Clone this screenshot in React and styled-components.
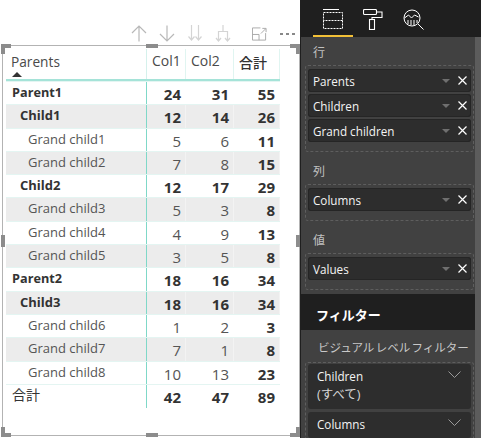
import React from "react";
import styled, { createGlobalStyle } from "styled-components";

const GlobalStyle = createGlobalStyle`
  html, body { margin: 0; padding: 0; background: #fff; }
  body { width: 481px; height: 438px; overflow: hidden; font-family: "Open Sans", "Noto Sans CJK JP", sans-serif; }
`;

const rows = [
  { name: "Parent1", level: 0, vals: [24, 31, 55], bold: true },
  { name: "Child1", level: 1, vals: [12, 14, 26], bold: true, shade: true },
  { name: "Grand child1", level: 2, vals: [5, 6, 11] },
  { name: "Grand child2", level: 2, vals: [7, 8, 15], shade: true },
  { name: "Child2", level: 1, vals: [12, 17, 29], bold: true },
  { name: "Grand child3", level: 2, vals: [5, 3, 8], shade: true },
  { name: "Grand child4", level: 2, vals: [4, 9, 13] },
  { name: "Grand child5", level: 2, vals: [3, 5, 8], shade: true },
  { name: "Parent2", level: 0, vals: [18, 16, 34], bold: true },
  { name: "Child3", level: 1, vals: [18, 16, 34], bold: true, shade: true },
  { name: "Grand child6", level: 2, vals: [1, 2, 3] },
  { name: "Grand child7", level: 2, vals: [7, 1, 8], shade: true },
  { name: "Grand child8", level: 2, vals: [10, 13, 23] },
  { name: "合計", level: 0, vals: [42, 47, 89], total: true },
];

const handles = [
  { x: "left", y: "top", w: 10, h: 10 },
  { x: "mid", y: "top", w: 12, h: 4 },
  { x: "right", y: "top", w: 10, h: 10 },
  { x: "left", y: "mid", w: 4, h: 12 },
  { x: "right", y: "mid", w: 4, h: 12 },
  { x: "left", y: "bottom", w: 10, h: 10 },
  { x: "mid", y: "bottom", w: 12, h: 4 },
  { x: "right", y: "bottom", w: 10, h: 10 },
];

export default function App() {
  return (
    <Page>
      <GlobalStyle />
      <Canvas>
        <Toolbar>
          <ToolIcon viewBox="0 0 16 17">
            <path d="M8 16.5V1M1 8l7-7 7 7" />
          </ToolIcon>
          <ToolIcon viewBox="0 0 16 17">
            <path d="M8 .5V16M1 9l7 7 7-7" />
          </ToolIcon>
          <ToolIcon viewBox="0 0 16 17" $faint>
            <path d="M4.5 0v15M1.5 11.5l3 3.5 3-3.5M11.5 0v15M8.5 11.5l3 3.5 3-3.5" />
          </ToolIcon>
          <ToolIcon viewBox="0 0 16 17" $faint>
            <path d="M8 0v6M3.5 16V6.5h9V16M1 13l2.5 3 2.5-3M10 13l2.5 3 2.5-3" />
          </ToolIcon>
          <FocusIcon viewBox="0 0 16 14">
            <path d="M9 .5H.5v13h14V6M.5 7.5h7v6M9.5 6.5l5-5M11 1h4v4" />
          </FocusIcon>
          <More>
            <i />
            <i />
            <i />
          </More>
        </Toolbar>
        <Frame>
          {handles.map((h) => (
            <Handle key={h.x + h.y} $x={h.x} $y={h.y} $w={h.w} $h={h.h} />
          ))}
          <Matrix>
            <HeaderRow>
              <NameHead>
                Parents
                <SortMark />
              </NameHead>
              <ColHead>Col1</ColHead>
              <ColHead>Col2</ColHead>
              <TotalHead>合計</TotalHead>
            </HeaderRow>
            {rows.map((r) => (
              <Row key={r.name} $shade={r.shade}>
                <NameCell $level={r.level} $bold={r.bold} $total={r.total}>
                  {r.name}
                </NameCell>
                {r.vals.map((v, i) => (
                  <ValueCell key={i} $bold={r.bold || r.total || i === 2} $shade={r.shade}>
                    {v}
                  </ValueCell>
                ))}
              </Row>
            ))}
          </Matrix>
        </Frame>
      </Canvas>

      <Panel>
        <Tabs>
          <Tab $active>
            <svg width="20" height="20" viewBox="0 0 20 20" fill="none" stroke="#fff">
              <path d="M0 .5h16" />
              <path strokeDasharray="2 1" d="M.5 3.5h19v8H.5zM.5 11.5v8h19v-8" />
            </svg>
          </Tab>
          <Tab>
            <svg width="20" height="21" viewBox="0 0 20 21" fill="none" stroke="#fff" strokeWidth="1.1">
              <rect x=".5" y=".5" width="13" height="5" rx="1" />
              <path d="M13.5 3h5.5v5.5H9V10.5" />
              <rect x="6.5" y="10.5" width="5" height="10" />
            </svg>
          </Tab>
          <Tab>
            <svg width="21" height="21" viewBox="0 0 21 21" fill="none" stroke="#fff" strokeWidth="1">
              <circle cx="9" cy="9" r="8" />
              <path d="M15 15l5.5 5.5M1.5 9l4-3 3 3 3-3 4 2M5 11v4M8 11v5M11 11v5M14 11v3" />
            </svg>
          </Tab>
        </Tabs>
        <Scroller>
          <FieldArea>
            <SectionLabel>行</SectionLabel>
            <Well>
              <Pill>Parents<PillControls /></Pill>
              <Pill>Children<PillControls /></Pill>
              <Pill>Grand children<PillControls /></Pill>
            </Well>
            <SectionLabel>列</SectionLabel>
            <Well>
              <Pill>Columns<PillControls /></Pill>
            </Well>
            <SectionLabel>値</SectionLabel>
            <Well>
              <Pill>Values<PillControls /></Pill>
            </Well>
          </FieldArea>
          <FilterTitle>フィルター</FilterTitle>
          <FilterArea>
            <FilterLabel>ビジュアル レベル フィルター</FilterLabel>
            <FilterWell>
              <FilterCard>
                <FilterName>Children<Chevron /></FilterName>
                <FilterValue>(すべて)</FilterValue>
              </FilterCard>
              <FilterCard>
                <FilterName>Columns<Chevron /></FilterName>
              </FilterCard>
            </FilterWell>
          </FilterArea>
        </Scroller>
        <ScrollThumb />
      </Panel>
    </Page>
  );
}

const PillControls = () => (
  <Controls>
    <Caret />
    <svg width="9" height="9" viewBox="0 0 9 9" stroke="#fff" strokeWidth="1.2">
      <path d="M.5.5l8 8M8.5.5l-8 8" />
    </svg>
  </Controls>
);

const Chevron = () => (
  <ChevronIcon width="13" height="7" viewBox="0 0 13 7" fill="none" stroke="#9a9a9a">
    <path d="M.5.5l6 6 6-6" />
  </ChevronIcon>
);

const Page = styled.div`
  display: flex;
  width: 481px;
  height: 438px;
  overflow: hidden;
`;

const Canvas = styled.div`
  width: 300px;
  flex: none;
  display: flex;
  flex-direction: column;
  padding: 24px 0 2px 2px;
  box-sizing: border-box;
`;

const Toolbar = styled.div`
  height: 19px;
  display: flex;
  align-items: center;
  justify-content: flex-end;
  padding-right: 5px;
`;

const ToolIcon = styled.svg`
  width: 16px;
  height: 17px;
  margin-right: 12px;
  fill: none;
  stroke: ${(p) => (p.$faint ? "#d4d4d4" : "#b8b8b8")};
  stroke-width: 1.2;
`;

const FocusIcon = styled.svg`
  width: 15px;
  height: 14px;
  margin: 0 13px 0 9px;
  fill: none;
  stroke: #a8a8a8;
`;

const More = styled.div`
  display: flex;
  gap: 3px;
  width: 15px;
  i {
    width: 3px;
    height: 2px;
    background: #888;
  }
`;

const Frame = styled.div`
  position: relative;
  flex: 1;
  margin-top: 2px;
  border: 1px solid #b3b3b3;
  padding: 3px 0 0 3px;
`;

const Handle = styled.span`
  position: absolute;
  width: ${(p) => p.$w}px;
  height: ${(p) => p.$h}px;
  background: #8c8c8c;
  ${(p) =>
    p.$x === "left"
      ? "left: -2px;"
      : p.$x === "right"
        ? "right: -1px;"
        : "left: 50%; margin-left: -5px;"}
  ${(p) =>
    p.$y === "top"
      ? "top: -2px;"
      : p.$y === "bottom"
        ? "bottom: -2px;"
        : "top: 50%; margin-top: -6px;"}
  ${(p) =>
    p.$x !== "mid" && p.$y !== "mid"
      ? `clip-path: polygon(${
          p.$x === "left"
            ? "0 0, 100% 0, 100% 40%, 40% 40%, 40% 100%, 0 100%"
            : "0 0, 100% 0, 100% 100%, 60% 100%, 60% 40%, 0 40%"
        });`
      : ""}
  ${(p) =>
    p.$y === "bottom" && p.$x === "left"
      ? "clip-path: polygon(0 0, 40% 0, 40% 60%, 100% 60%, 100% 100%, 0 100%);"
      : ""}
  ${(p) =>
    p.$y === "bottom" && p.$x === "right"
      ? "clip-path: polygon(60% 0, 100% 0, 100% 100%, 0 100%, 0 60%, 60% 60%);"
      : ""}
`;

const Matrix = styled.div`
  width: 274px;
  display: flex;
  flex-direction: column;
  color: #333;
`;

const grid = "141px 39px 48px 46px";

const HeaderRow = styled.div`
  display: grid;
  grid-template-columns: ${grid};
  height: 30px;
  border-bottom: 2px solid #a5e3d8;
`;

const NameHead = styled.div`
  position: relative;
  font-size: 13.7px;
  line-height: 20px;
  padding: 3px 0 0 5px;
  color: #4a4a4a;
  border-right: 1px solid #d5f1ec;
`;

const SortMark = styled.span`
  position: absolute;
  left: 6px;
  top: 23px;
  width: 0;
  height: 0;
  border-left: 5px solid transparent;
  border-right: 5px solid transparent;
  border-bottom: 5px solid #333;
`;

const ColHead = styled.div`
  font-size: 14px;
  line-height: 20px;
  padding: 2px 0 0 5px;
  color: #4a4a4a;
  border-right: 1px solid #e0f5f1;
`;

const TotalHead = styled(ColHead)`
  color: #333;
  font-family: "Noto Sans CJK JP", sans-serif;
  font-weight: 500;
  padding-top: 3px;
`;

const Row = styled.div`
  display: grid;
  grid-template-columns: ${grid};
  height: 23.3px;
  box-sizing: border-box;
  background: ${(p) => (p.$shade ? "#ececec" : "transparent")};
  border-top: 1px solid #e4f5f2;
`;

const NameCell = styled.div`
  font-size: ${(p) => (p.$total ? 14 : p.$level === 0 && p.$bold ? 12.7 : 13)}px;
  font-weight: ${(p) => (p.$bold ? 700 : 400)};
  line-height: 20px;
  padding-left: ${(p) => [6, 14, 22][p.$level]}px;
  color: ${(p) => (p.$level === 2 ? "#555" : "#333")};
  border-right: 1px solid #7fd8c8;
  white-space: nowrap;
`;

const ValueCell = styled.div`
  font-size: 15px;
  font-weight: ${(p) => (p.$bold ? 700 : 400)};
  line-height: 22px;
  padding: 1px 4px 0 0;
  text-align: right;
  color: ${(p) => (p.$bold ? "#333" : "#555")};
  border-right: 1px solid ${(p) => (p.$shade ? "#f3f3f3" : "transparent")};
`;

const Panel = styled.div`
  position: relative;
  width: 181px;
  flex: none;
  display: flex;
  flex-direction: column;
  background: #1f1f1f;
`;

const Tabs = styled.div`
  height: 37px;
  display: flex;
  padding-left: 13px;
  flex: none;
`;

const Tab = styled.div`
  width: 40px;
  height: 37px;
  display: flex;
  align-items: flex-start;
  justify-content: center;
  padding-top: 9px;
  box-sizing: border-box;
  border-bottom: ${(p) => (p.$active ? "2px solid #f2c037" : "0")};
`;

const Scroller = styled.div`
  flex: 1;
  display: flex;
  flex-direction: column;
  margin-left: 1px;
  margin-right: 6px;
`;

const FieldArea = styled.div`
  height: 257px;
  flex: none;
  background: #414141;
  padding: 6px 1px 0 4px;
  box-sizing: border-box;
`;

const SectionLabel = styled.div`
  height: 22px;
  margin: 0 0 0 8px;
  font-size: 12px;
  line-height: 18px;
  color: #c0c0c0;
  font-family: "Noto Sans CJK JP", sans-serif;
`;

const Well = styled.div`
  border: 1px dashed #5e5e5e;
  border-radius: 3px;
  padding: 3px 2px 9px 2px;
  margin-bottom: 10px;
  display: flex;
  flex-direction: column;
  gap: 2px;
`;

const Pill = styled.div`
  height: 23px;
  background: #2d2d2d;
  border-radius: 3px;
  display: flex;
  align-items: center;
  justify-content: space-between;
  padding: 0 4px 0 5px;
  font-size: 11.7px;
  color: #f4f4f4;
  box-shadow: 0 0 0 1px #252525 inset;
`;

const Controls = styled.div`
  display: flex;
  align-items: center;
  gap: 8px;
`;

const Caret = styled.span`
  width: 0;
  height: 0;
  border-left: 4px solid transparent;
  border-right: 4px solid transparent;
  border-top: 4px solid #6f6f6f;
`;

const FilterTitle = styled.div`
  height: 36px;
  box-sizing: border-box;
  padding: 4px 0 0 15px;
  display: flex;
  align-items: center;
  font-family: "Noto Sans CJK JP", sans-serif;
  font-size: 13px;
  font-weight: 700;
  color: #fff;
  background: #1f1f1f;
  flex: none;
`;

const FilterArea = styled.div`
  flex: 1;
  background: #414141;
  padding: 0 1px 0 4px;
  overflow: hidden;
`;

const FilterLabel = styled.div`
  font-family: "Noto Sans CJK JP", sans-serif;
  font-size: 11.5px;
  line-height: 18px;
  padding: 8px 0 0 13px;
  color: #c8c8c8;
  white-space: nowrap;
  word-spacing: -1.2px;
`;

const FilterWell = styled.div`
  margin-top: 6px;
  border: 1px dashed #5e5e5e;
  border-radius: 3px;
  padding: 1px 2px;
  display: flex;
  flex-direction: column;
  gap: 3px;
`;

const FilterCard = styled.div`
  background: #2d2d2d;
  border-radius: 3px;
  padding: 3px 9px 5px;
  color: #f4f4f4;
  font-size: 11.7px;
`;

const FilterName = styled.div`
  display: flex;
  justify-content: space-between;
  line-height: 18px;
`;

const FilterValue = styled.div`
  font-size: 12.5px;
  line-height: 18px;
  margin-top: 1px;
  color: #d8d8d8;
`;

const ChevronIcon = styled.svg`
  margin: 4px 1px 0 0;
`;

const ScrollThumb = styled.div`
  position: absolute;
  right: 0;
  top: 37px;
  bottom: 0;
  width: 6px;
  background: #5c5c5c;
`;
